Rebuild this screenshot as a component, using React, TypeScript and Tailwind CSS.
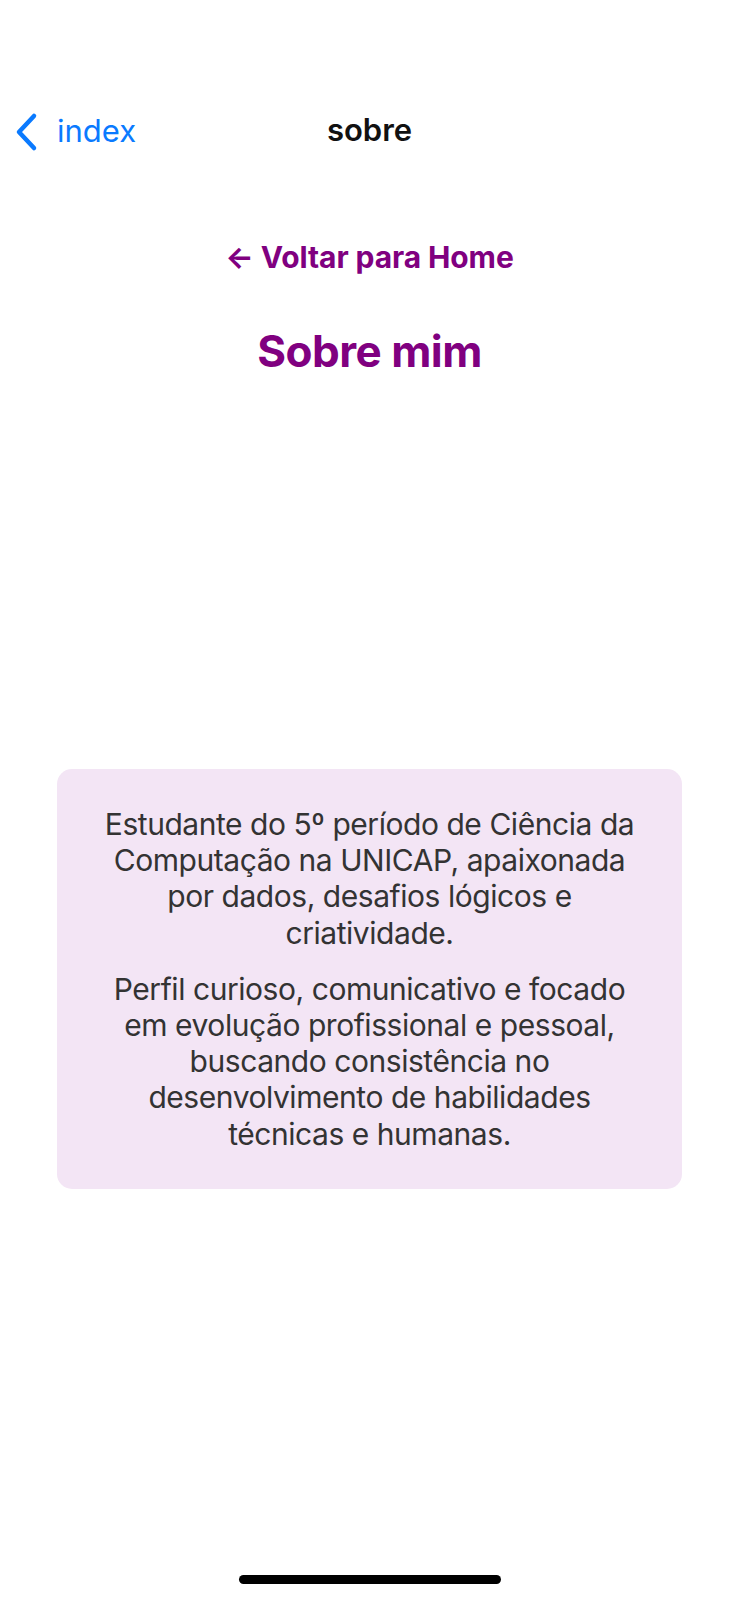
const paragraphOne = [
  "Estudante do 5º período de Ciência da",
  "Computação na UNICAP, apaixonada",
  "por dados, desafios lógicos e",
  "criatividade.",
];

const paragraphTwo = [
  "Perfil curioso, comunicativo e focado",
  "em evolução profissional e pessoal,",
  "buscando consistência no",
  "desenvolvimento de habilidades",
  "técnicas e humanas.",
];

function BackChevron() {
  return (
    <svg width="24" height="40" viewBox="0 0 24 40" fill="none">
      <path
        d="M19 4 L4 20 L19 36"
        stroke="#0a7aff"
        strokeWidth="4.5"
        strokeLinecap="round"
        strokeLinejoin="round"
      />
    </svg>
  );
}

export default function App() {
  return (
    <div
      className="w-[739px] h-[1600px] bg-white relative flex flex-col"
      style={{ fontFamily: "Inter, 'Noto Sans', sans-serif" }}
    >
      {/* nav bar */}
      <header className="pt-[90px]">
        <div className="h-[84px] grid grid-cols-[1fr_auto_1fr] items-center">
          <button className="flex items-center gap-[18px] pl-[15px] text-[#0a7aff] text-[31px] leading-none">
            <BackChevron />
            <span className="-mt-[4px]">index</span>
          </button>
          <h1 className="text-[31px] font-semibold text-[#111] -mt-[4px]">sobre</h1>
          <div />
        </div>
      </header>

      <main className="flex flex-col items-center">
        <a className="mt-[65px] text-[30px] leading-[36px] font-bold text-[#800080] tracking-[-0.1px]">
          ← Voltar para Home
        </a>

        <h2 className="mt-[49px] text-[44px] leading-[54px] font-bold text-[#800080] tracking-[-0.5px]">
          Sobre mim
        </h2>

        <section className="mt-[391px] w-[625px] rounded-[15px] bg-[#f3e5f5] py-[37px] px-[20px] text-center text-[#333] text-[30px] leading-[36.2px] tracking-[-0.45px]">
          <p>
            {paragraphOne.map((line) => (
              <span key={line} className="block">{line}</span>
            ))}
          </p>
          <p className="mt-[20px]">
            {paragraphTwo.map((line) => (
              <span key={line} className="block">{line}</span>
            ))}
          </p>
        </section>
      </main>

      <div className="absolute bottom-[16px] left-[239px] w-[262px] h-[9px] rounded-full bg-black" />
    </div>
  );
}
